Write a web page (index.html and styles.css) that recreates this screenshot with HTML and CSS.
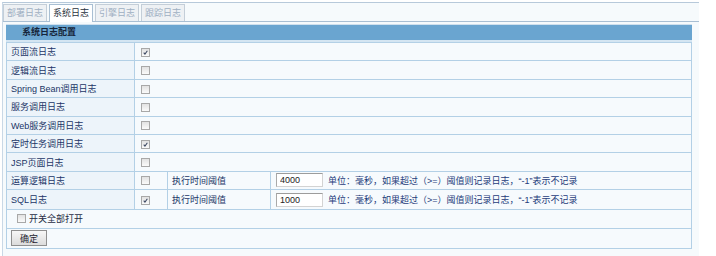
FILE: index.html
```html
<!DOCTYPE html>
<html lang="zh-CN">
<head>
  <meta charset="UTF-8" />
  <title>系统日志</title>
  <link rel="stylesheet" href="styles.css">
</head>
<body>

  <div class="frame">
    <ul class="tabs">
      <li>部署日志</li>
      <li class="active">系统日志</li>
      <li>引擎日志</li>
      <li>跟踪日志</li>
    </ul>

    <div class="panel">
      <div class="panel-head">系统日志配置</div>
      <table class="cfg">
        <colgroup>
          <col class="c-label">
          <col class="c-check">
          <col class="c-name">
          <col>
        </colgroup>
        <tr>
          <td class="label">页面流日志</td>
          <td colspan="3"><span class="cb on"><svg viewBox="0 0 9 9"><path d="M2.2 4.6 L3.8 6.6 L6.9 2.2"/></svg></span></td>
        </tr>
        <tr>
          <td class="label">逻辑流日志</td>
          <td colspan="3"><span class="cb"></span></td>
        </tr>
        <tr>
          <td class="label">Spring Bean调用日志</td>
          <td colspan="3"><span class="cb"></span></td>
        </tr>
        <tr>
          <td class="label">服务调用日志</td>
          <td colspan="3"><span class="cb"></span></td>
        </tr>
        <tr>
          <td class="label">Web服务调用日志</td>
          <td colspan="3"><span class="cb"></span></td>
        </tr>
        <tr>
          <td class="label">定时任务调用日志</td>
          <td colspan="3"><span class="cb on"><svg viewBox="0 0 9 9"><path d="M2.2 4.6 L3.8 6.6 L6.9 2.2"/></svg></span></td>
        </tr>
        <tr>
          <td class="label">JSP页面日志</td>
          <td colspan="3"><span class="cb"></span></td>
        </tr>
        <tr>
          <td class="label">运算逻辑日志</td>
          <td><span class="cb"></span></td>
          <td class="name">执行时间阈值</td>
          <td class="limit"><input class="num" type="text" value="4000"><span class="unit">单位：毫秒，如果超过（&gt;=）阈值则记录日志，“-1”表示不记录</span></td>
        </tr>
        <tr class="tall">
          <td class="label">SQL日志</td>
          <td><span class="cb on"><svg viewBox="0 0 9 9"><path d="M2.2 4.6 L3.8 6.6 L6.9 2.2"/></svg></span></td>
          <td class="name">执行时间阈值</td>
          <td class="limit"><input class="num" type="text" value="1000"><span class="unit">单位：毫秒，如果超过（&gt;=）阈值则记录日志，“-1”表示不记录</span></td>
        </tr>
        <tr>
          <td class="all" colspan="4"><span class="cb"></span><span class="all-text">开关全部打开</span></td>
        </tr>
        <tr class="tall">
          <td class="submit" colspan="4"><button class="btn">确定</button></td>
        </tr>
      </table>
    </div>
  </div>

</body>
</html>
```

FILE: styles.css
```css
* {
  margin: 0;
  padding: 0;
  box-sizing: border-box;
}

body {
  font-family: "Liberation Sans", "Noto Sans CJK SC", sans-serif;
  font-size: 9px;
  color: #1b3566;
  background: #fff;
}

.frame {
  margin: 2px 0 0 2px;
  width: 697px;
  height: 254px;
  border-top: 1px solid #b7c9da;
  border-left: 1px solid #c9d8e6;
  background: #f6fafc;
}

.tabs {
  display: flex;
  align-items: flex-end;
  gap: 2px;
  height: 18px;
  margin-top: 1px;
  list-style: none;
  border-bottom: 1px solid #a9bfd3;
}

.tabs li {
  height: 17px;
  line-height: 16px;
  padding: 0 3px;
  border: 1px solid #c4ced8;
  border-bottom: none;
  background: #eef1f4;
  color: #9eafc2;
}

.tabs li.active {
  height: 18px;
  margin-bottom: -1px;
  border-color: #a9bfd3;
  background: #fff;
  color: #2a3340;
}

.panel {
  margin: 2px 0 0 3px;
  width: 686px;
}

.panel-head {
  height: 18px;
  line-height: 15px;
  padding-left: 16px;
  border-top: 1px solid #cfe0ee;
  border-bottom: 2px solid #d4e5f2;
  background: #6aa5d0;
  color: #16253b;
  font-weight: bold;
}

.cfg {
  width: 686px;
  table-layout: fixed;
  border-collapse: collapse;
  border: 1px solid #b3d0e6;
}

.c-label { width: 128px; }
.c-check { width: 33px; }
.c-name { width: 103px; }

.cfg td {
  height: 18.4px;
  padding: 0 0 0 6px;
  border: 1px solid #b3d0e6;
  background: #f6fafd;
  vertical-align: middle;
  white-space: nowrap;
}

.cfg tr.tall td {
  height: 20px;
}

.cfg td.label {
  padding-left: 4px;
  background: #edf4fa;
}

.cfg td.name {
  padding-left: 4px;
}

.cfg td.limit {
  padding-left: 5px;
}

.cfg td.all {
  padding-left: 10px;
}

.cfg td.submit {
  padding-left: 4px;
}

.cb {
  display: inline-block;
  width: 9px;
  height: 9px;
  border: 1px solid #a8a8a8;
  background: linear-gradient(#e2e2e2, #fafafa);
  vertical-align: middle;
}

.cb svg {
  display: block;
  width: 7px;
  height: 7px;
}

.cb svg path {
  fill: none;
  stroke: #3a4660;
  stroke-width: 1.3;
}

.all-text {
  margin-left: 3px;
  vertical-align: middle;
  color: #1f2c44;
}

.num {
  width: 47px;
  height: 14px;
  padding: 0 3px;
  border: 1px solid #d3d3d3;
  border-top-color: #9c9c9c;
  border-left-color: #a9a9a9;
  background: #fff;
  font: inherit;
  color: #222;
  vertical-align: middle;
}

.unit {
  margin-left: 5px;
  color: #1e3c7b;
  vertical-align: middle;
}

.btn {
  width: 36px;
  height: 16px;
  border: 1px solid #8f8f8f;
  background: linear-gradient(#f7f7f7, #dcdcdc);
  font: inherit;
  color: #1f2430;
  vertical-align: middle;
}
```
